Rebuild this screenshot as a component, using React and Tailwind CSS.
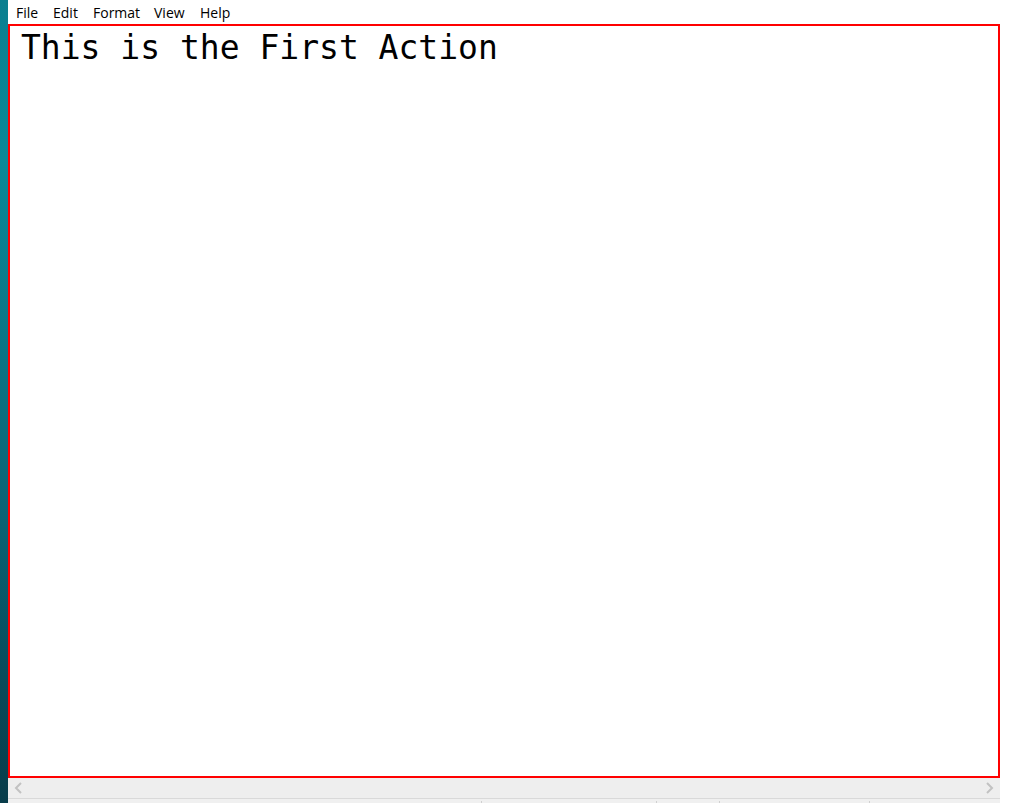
import React from "react";

export default function App() {
  return (
    <div className="w-[1030px] h-[803px] flex bg-white overflow-hidden">
      <div className="w-[8px] h-full bg-[linear-gradient(180deg,#0a7f90_0%,#0b8898_20%,#0a7384_45%,#0a6274_65%,#094a5a_85%,#083c4a_100%)]" />
      <div className="w-[992px] h-full flex flex-col bg-white">
        <div
          className="h-[24px] flex items-center text-[14px] text-black"
          style={{ fontFamily: '"Open Sans", "Noto Sans", sans-serif' }}
        >
          <span className="ml-[8px] w-[37px]">File</span>
          <span className="w-[40px]">Edit</span>
          <span className="w-[61px]">Format</span>
          <span className="w-[46px]">View</span>
          <span>Help</span>
        </div>
        <div className="h-[754px] border-2 border-[#ff0000] pl-[11px] pt-[3px]">
          <div
            className="text-[33px] leading-[38px] text-black whitespace-pre"
            style={{ fontFamily: '"DejaVu Sans Mono", monospace' }}
          >
            This is the First Action
          </div>
        </div>
        <div className="h-[20px] bg-[#eeeeee] flex items-center justify-between px-[6px]">
          <svg width="10" height="12" viewBox="0 0 10 12">
            <path d="M7 1 L2 6 L7 11" fill="none" stroke="#c2c2c2" strokeWidth="2" />
          </svg>
          <svg width="10" height="12" viewBox="0 0 10 12">
            <path d="M3 1 L8 6 L3 11" fill="none" stroke="#c2c2c2" strokeWidth="2" />
          </svg>
        </div>
        <div className="flex-1 bg-[#f0f0f0] border-t border-[#d9d9d9] flex">
          <div className="w-[474px] border-r border-[#d0d0d0] mt-[2px]" />
          <div className="w-[175px] border-r border-[#d0d0d0] mt-[2px]" />
          <div className="w-[63px] border-r border-[#d0d0d0] mt-[2px]" />
          <div className="w-[150px] border-r border-[#d0d0d0] mt-[2px]" />
          <div className="flex-1" />
        </div>
      </div>
    </div>
  );
}
